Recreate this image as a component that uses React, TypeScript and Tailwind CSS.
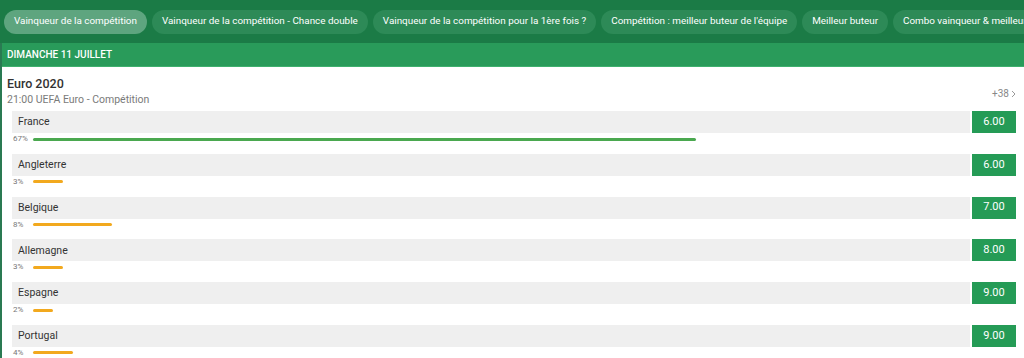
import React from "react";

const tabs = [
  "Vainqueur de la compétition",
  "Vainqueur de la compétition - Chance double",
  "Vainqueur de la compétition pour la 1ère fois ?",
  "Compétition : meilleur buteur de l'équipe",
  "Meilleur buteur",
  "Combo vainqueur & meilleur buteur",
];

const rows = [
  { name: "France", pct: 67, odds: "6.00" },
  { name: "Angleterre", pct: 3, odds: "6.00" },
  { name: "Belgique", pct: 8, odds: "7.00" },
  { name: "Allemagne", pct: 3, odds: "8.00" },
  { name: "Espagne", pct: 2, odds: "9.00" },
  { name: "Portugal", pct: 4, odds: "9.00" },
];

export default function App() {
  return (
    <div
      className="w-[1024px] h-[358px] overflow-hidden bg-white"
      style={{ fontFamily: "Roboto, 'Liberation Sans', sans-serif" }}
    >
      <div className="h-[43px] bg-[#1b7b46] flex items-center gap-[5px] pl-[4px] overflow-hidden whitespace-nowrap">
        {tabs.map((t, i) => (
          <div
            key={t}
            className={`h-[24px] shrink-0 flex items-center px-[10px] rounded-full text-[9.9px] text-white ${
              i === 0 ? "bg-[#5ea57f]" : "bg-[#2d8a57]"
            }`}
          >
            {t}
          </div>
        ))}
      </div>
      <div className="border-l-[2px] border-[#2a7a52]">
        <div className="h-[24px] bg-[#299b5a] flex items-center pl-[5px] text-[10px] font-medium text-white border-b border-[#3fb06e]">
          DIMANCHE 11 JUILLET
        </div>
        <div className="pl-[5px] pr-[8px] pt-[9px]">
          <div className="flex justify-between items-end">
            <div>
              <div className="text-[12.5px] font-medium text-[#333] leading-[16px]">Euro 2020</div>
              <div className="text-[10.5px] text-[#7a7a7a] leading-[14px] mt-[1px]">
                21:00 UEFA Euro - Compétition
              </div>
            </div>
            <div className="text-[10px] text-[#888] mb-[6px] flex items-center gap-[2px]">
              +38
              <svg width="5" height="8" viewBox="0 0 5 8">
                <path d="M1 1l3 3-3 3" stroke="#999" strokeWidth="1" fill="none" />
              </svg>
            </div>
          </div>
          <div className="pl-[5px] mt-[4px]">
            {rows.map((r) => (
              <div key={r.name} className="h-[42.8px]">
                <div className="flex h-[22px] gap-[2px]">
                  <div className="flex-1 bg-[#efefef] flex items-center pl-[6px] text-[10.5px] text-[#333]">
                    {r.name}
                  </div>
                  <div className="w-[44px] bg-[#259b56] flex items-center justify-center text-[11px] text-white">
                    {r.odds}
                  </div>
                </div>
                <div className="flex items-center h-[12px] pl-[1px]">
                  <span className="text-[8px] text-[#777] w-[20px]">{r.pct}%</span>
                  <div
                    className={`h-[3px] rounded-full ${r.pct > 50 ? "bg-[#4aa84f]" : "bg-[#f2a91e]"}`}
                    style={{ width: `${r.pct * 9.9}px` }}
                  />
                </div>
              </div>
            ))}
          </div>
        </div>
      </div>
    </div>
  );
}
